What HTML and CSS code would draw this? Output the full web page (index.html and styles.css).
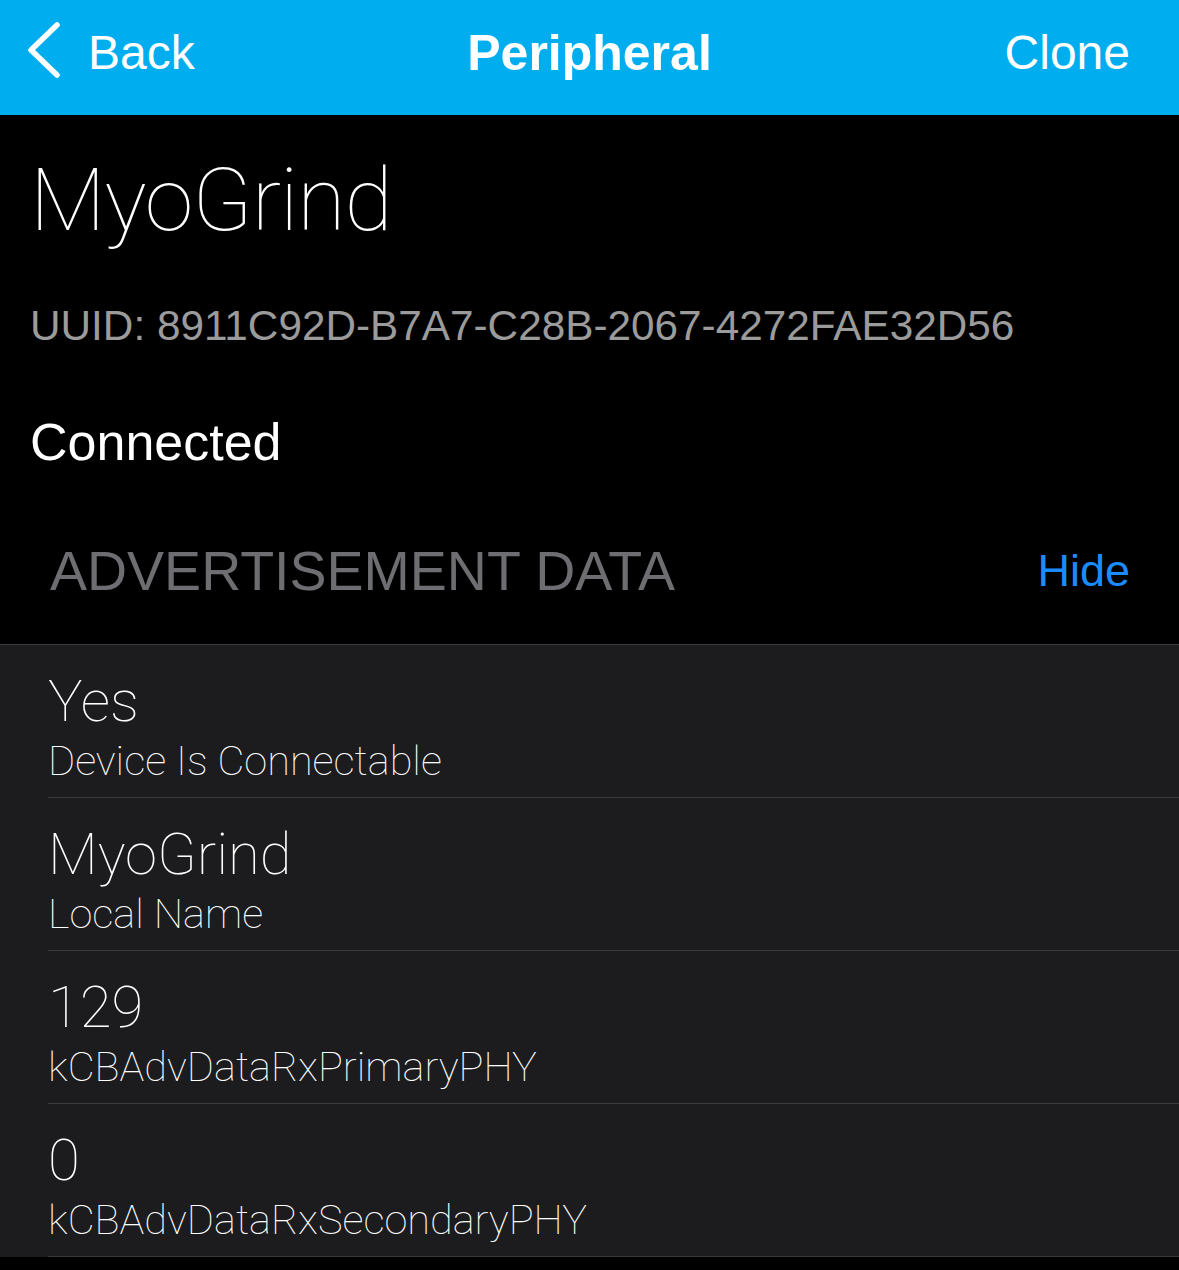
FILE: index.html
```html
<!DOCTYPE html>
<html lang="en">
<head>
<meta charset="utf-8">
<title>Peripheral</title>
<link rel="stylesheet" href="styles.css">
</head>
<body>
<header class="nav">
  <div class="nav-left">
    <svg class="chev" width="40" height="60" viewBox="0 0 40 60" aria-hidden="true">
      <polyline points="33,4 7,29 33,54" fill="none" stroke="#fff" stroke-width="5.5" stroke-linecap="round" stroke-linejoin="round"/>
    </svg>
    <span class="nav-btn">Back</span>
  </div>
  <div class="nav-title">Peripheral</div>
  <div class="nav-right"><span class="nav-btn">Clone</span></div>
</header>
<main class="content">
  <section class="device">
    <h1 class="device-name">MyoGrind</h1>
    <p class="uuid">UUID: 8911C92D-B7A7-C28B-2067-4272FAE32D56</p>
    <p class="status">Connected</p>
  </section>
  <div class="section-head">
    <span class="section-title">ADVERTISEMENT DATA</span>
    <span class="section-link">Hide</span>
  </div>
  <ul class="list">
    <li class="row"><div class="row-inner"><div class="value">Yes</div><div class="label">Device Is Connectable</div></div></li>
    <li class="row"><div class="row-inner"><div class="value">MyoGrind</div><div class="label">Local Name</div></div></li>
    <li class="row"><div class="row-inner"><div class="value">129</div><div class="label">kCBAdvDataRxPrimaryPHY</div></div></li>
    <li class="row"><div class="row-inner"><div class="value">0</div><div class="label">kCBAdvDataRxSecondaryPHY</div></div></li>
  </ul>
</main>
</body>
</html>
```

FILE: styles.css
```css
html, body {
  margin: 0;
  padding: 0;
  background: #000;
  height: 100%;
  overflow: hidden;
}
body {
  font-family: "Liberation Sans", Arial, sans-serif;
  color: #fff;
}
.nav {
  box-sizing: border-box;
  height: 115px;
  background: #00aeef;
  display: grid;
  grid-template-columns: 1fr auto 1fr;
  align-items: center;
  padding: 0 28px 10px 28px;
}
.nav-left {
  display: flex;
  align-items: center;
}
.chev {
  display: block;
  margin-left: -4px;
  margin-right: 24px;
  margin-top: -4px;
}
.nav-btn {
  font-size: 48px;
  line-height: 60px;
  color: #fff;
}
.nav-title {
  font-size: 50px;
  font-weight: bold;
  line-height: 60px;
  color: #fff;
}
.nav-right {
  justify-self: end;
  margin-right: 21px;
}
.content {
  background: #000;
}
.device {
  padding: 35px 30px 0 30px;
}
.device-name {
  margin: 0;
  font-family: Roboto, "Liberation Sans", sans-serif;
  font-weight: 100;
  font-size: 88px;
  line-height: 100px;
  letter-spacing: -1px;
}
.uuid {
  margin: 51px 0 0 0;
  font-size: 42.3px;
  line-height: 50px;
  color: #9b9b9b;
}
.status {
  margin: 61px 0 0 0;
  font-size: 52px;
  line-height: 60px;
  color: #fff;
}
.section-head {
  display: flex;
  justify-content: space-between;
  align-items: baseline;
  padding: 64px 49px 34px 50px;
  line-height: 70px;
}
.section-title {
  font-size: 55.5px;
  color: #6d6d72;
}
.section-link {
  font-size: 45px;
  color: #1a8cff;
  position: relative;
  top: -4px;
}
.list {
  list-style: none;
  margin: 0;
  padding: 0;
  background: #1c1c1e;
  border-top: 1px solid #3a3a3c;
  font-family: Roboto, "Liberation Sans", sans-serif;
  font-weight: 100;
}
.row {
  padding-left: 48px;
}
.row-inner {
  padding: 24px 0 12px 0;
  border-bottom: 1px solid #3a3a3c;
}
.value {
  font-size: 58px;
  line-height: 64px;
  margin-bottom: 4px;
}
.label {
  font-size: 41.5px;
  line-height: 48px;
}
```
